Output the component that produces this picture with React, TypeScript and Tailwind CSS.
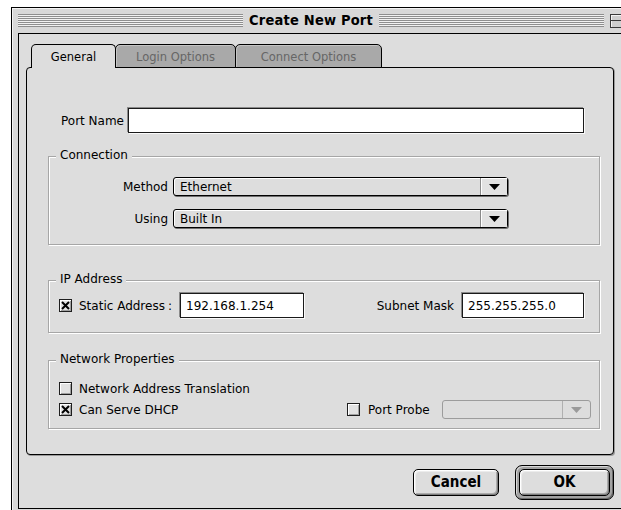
import React from "react";

const Stripes = () => (
  <div className="flex flex-1 flex-col gap-px bg-[#f1f1f1] py-0">
    {Array.from({ length: 7 }).map((_, i) => (
      <div key={i} className="h-px bg-[#8e8e8e]" />
    ))}
  </div>
);

const CheckBox = ({ checked }: { checked?: boolean }) => (
  <span className="flex h-[13px] w-[13px] shrink-0 items-center justify-center border border-[#1e1e1e] bg-[#e2e2e2] shadow-[inset_1px_1px_0_#fff,inset_-1px_-1px_0_#a0a0a0]">
    {checked && (
      <svg width="9" height="9" viewBox="0 0 9 9">
        <path d="M1 1L8 8M8 1L1 8" stroke="#000" strokeWidth="2" />
      </svg>
    )}
  </span>
);

const Popup = ({ value, className }: { value: string; className: string }) => (
  <div
    className={`flex h-[19px] rounded-[3px] border border-black bg-[#dddddd] shadow-[inset_1px_1px_0_#fff,1px_1px_0_#6f6f6f] ${className}`}
  >
    <span className="flex flex-1 items-center pl-[6px]">{value}</span>
    <span className="flex w-[27px] items-center justify-center border-l border-[#8a8a8a] bg-[#e2e2e2] shadow-[inset_1px_1px_0_#fff]">
      <svg width="11" height="6" viewBox="0 0 11 6">
        <path d="M0 0h11L5.5 6z" fill="#000" />
      </svg>
    </span>
  </div>
);

const TextField = ({ value, className }: { value?: string; className: string }) => (
  <div
    className={`flex h-[25px] items-center border border-[#1a1a1a] bg-white pl-[5px] shadow-[-1px_-1px_0_#8a8a8a,1px_1px_0_#fafafa] ${className}`}
  >
    {value}
  </div>
);

const Group = ({
  title,
  className,
  children,
}: {
  title: string;
  className: string;
  children: React.ReactNode;
}) => (
  <div
    className={`relative ml-[21px] w-[552px] border border-[#a6a6a6] shadow-[inset_1px_1px_0_#fff,1px_1px_0_#fff] ${className}`}
  >
    <span className="absolute -top-[8px] left-[7px] bg-[#dddddd] px-[4px]">{title}</span>
    {children}
  </div>
);

const Tab = ({ label, active, className }: { label: string; active?: boolean; className: string }) => (
  <div
    className={`relative z-10 flex h-[24px] items-center justify-center rounded-t-[5px] border border-black pt-[3px] text-[11.5px] ${
      active ? "border-b-0 bg-[#dddddd] text-black" : "bg-[#a9a9a9] text-[#666666] shadow-[inset_1px_1px_0_#c4c4c4]"
    } ${className}`}
  >
    {label}
  </div>
);

export default function App() {
  return (
    <div className="h-[510px] w-[621px] overflow-hidden bg-white pl-[11px] pt-[7px] font-['DejaVu_Sans',sans-serif] text-[12px] leading-none text-black">
      <div className="w-[618px] border border-black bg-[#d8d8d8] shadow-[inset_1px_1px_0_#f4f4f4]">
        {/* title bar */}
        <div className="flex h-[25px] items-center pl-[6px] pr-[5px]">
          <Stripes />
          <span className="px-[6px] font-['DejaVu_Sans_Condensed','DejaVu_Sans',sans-serif] text-[14.5px] font-bold tracking-[0.2px]">
            Create New Port
          </span>
          <Stripes />
          <span className="ml-[6px] flex h-[14px] w-[13px] items-center border border-[#3a3a3a] bg-[#cfcfcf] shadow-[inset_1px_1px_0_#f4f4f4]">
            <span className="h-px w-full bg-[#3a3a3a]" />
          </span>
        </div>

        <div className="px-[6px] pb-[6px]">
          <div className="border border-black bg-[#dddddd] px-[7px] pb-[8px] pt-[10px]">
            {/* tabs */}
            <div className="-mb-px flex pl-[5px]">
              <Tab label="General" active className="w-[85px]" />
              <Tab label="Login Options" className="-ml-px w-[121px]" />
              <Tab label="Connect Options" className="-ml-px w-[147px]" />
            </div>

            <div className="rounded-[4px] border border-black bg-[#dddddd] pb-[25px] pt-[40px] shadow-[1px_1px_0_#9a9a9a]">
              <div className="flex items-center pl-[34px]">
                <span className="w-[67px]">Port Name</span>
                <TextField className="w-[456px]" />
              </div>

              <Group title="Connection" className="mt-[23px] pb-[16px] pt-[20px]">
                <div className="flex flex-col gap-[13px]">
                  <div className="flex items-center">
                    <span className="w-[124px] pr-[5px] text-right">Method</span>
                    <Popup value="Ethernet" className="w-[335px]" />
                  </div>
                  <div className="flex items-center">
                    <span className="w-[124px] pr-[5px] text-right">Using</span>
                    <Popup value="Built In" className="w-[335px]" />
                  </div>
                </div>
              </Group>

              <Group title="IP Address" className="mt-[35px] pb-[14px] pt-[12px]">
                <div className="flex items-center pl-[10px] pr-[15px]">
                  <CheckBox checked />
                  <span className="ml-[7px] w-[101px]">
                    Static Address<span className="ml-[3px]">:</span>
                  </span>
                  <TextField value="192.168.1.254" className="w-[124px]" />
                  <span className="flex-1" />
                  <span>Subnet Mask</span>
                  <TextField value="255.255.255.0" className="ml-[8px] w-[122px]" />
                </div>
              </Group>

              <Group title="Network Properties" className="mt-[27px] pb-[9px] pt-[21px]">
                <div className="flex items-center pl-[10px]">
                  <CheckBox />
                  <span className="ml-[7px]">Network Address Translation</span>
                </div>
                <div className="mt-[5px] flex h-[19px] items-center pl-[10px] pr-[8px]">
                  <CheckBox checked />
                  <span className="ml-[7px]">Can Serve DHCP</span>
                  <span className="flex-1" />
                  <CheckBox />
                  <span className="ml-[8px] w-[74px]">Port Probe</span>
                  <div className="flex h-[19px] w-[149px] rounded-[3px] border border-[#9c9c9c] bg-[#dddddd]">
                    <span className="flex-1" />
                    <span className="flex w-[28px] items-center justify-center border-l border-[#b0b0b0]">
                      <svg width="11" height="6" viewBox="0 0 11 6">
                        <path d="M0 0h11L5.5 6z" fill="#9a9a9a" />
                      </svg>
                    </span>
                  </div>
                </div>
              </Group>
            </div>

            {/* dialog buttons */}
            <div className="flex items-center justify-end gap-[16px] pt-[10px] font-['DejaVu_Sans_Condensed','DejaVu_Sans',sans-serif] text-[15px] font-bold">
              <button className="flex h-[27px] w-[86px] items-center justify-center rounded-[5px] border border-black bg-[#dddddd] shadow-[inset_1px_1px_0_#fff,inset_-1px_-1px_0_#7d7d7d,inset_2px_2px_0_#ececec,inset_-2px_-2px_0_#ababab]">
                Cancel
              </button>
              <div className="h-[35px] w-[99px] rounded-[7px] border border-black bg-[#a3a3a3] p-[3px] shadow-[inset_1px_1px_0_#d8d8d8,inset_-1px_-1px_0_#6a6a6a]">
                <button className="flex h-full w-full items-center justify-center rounded-[5px] border border-black bg-[#dddddd] shadow-[inset_1px_1px_0_#fff,inset_-1px_-1px_0_#7d7d7d,inset_2px_2px_0_#ececec,inset_-2px_-2px_0_#ababab]">
                  OK
                </button>
              </div>
            </div>
          </div>
        </div>
      </div>
    </div>
  );
}
